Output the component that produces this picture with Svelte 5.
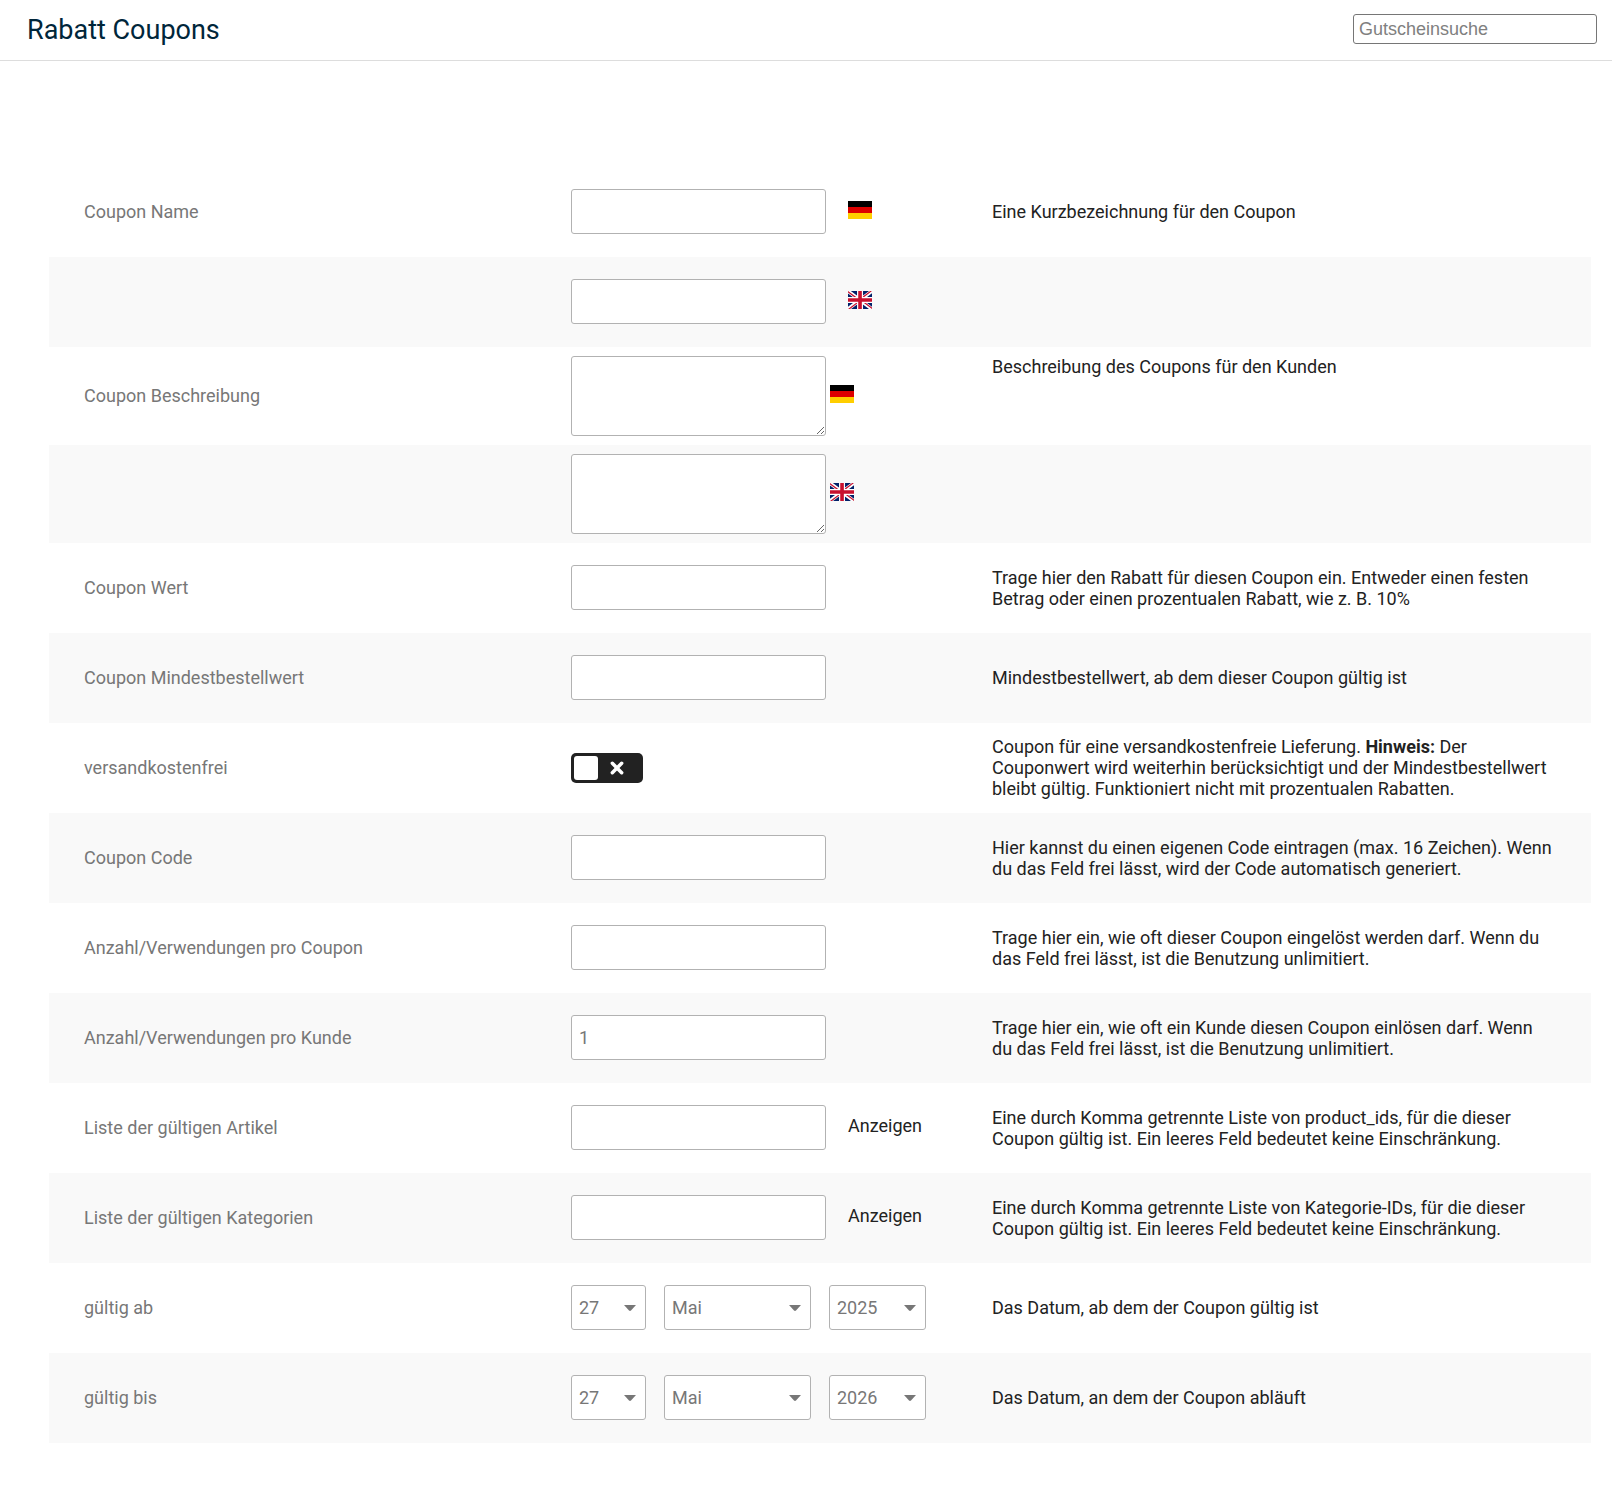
<script lang="ts">
    type Lang = 'de' | 'en';

    interface Field {
        id: string;
        kind: 'text' | 'area' | 'switch' | 'date';
        label?: string;
        aria?: string;
        help?: string;
        note?: string;
        rest?: string;
        lang?: Lang;
        link?: boolean;
        value?: string;
        year?: string;
    }

    const fields: Field[] = [
        { id: 'name-de', kind: 'text', label: 'Coupon Name', lang: 'de', help: 'Eine Kurzbezeichnung für den Coupon' },
        { id: 'name-en', kind: 'text', aria: 'Coupon Name', lang: 'en' },
        { id: 'desc-de', kind: 'area', label: 'Coupon Beschreibung', lang: 'de', help: 'Beschreibung des Coupons für den Kunden' },
        { id: 'desc-en', kind: 'area', aria: 'Coupon Beschreibung', lang: 'en' },
        { id: 'amount', kind: 'text', label: 'Coupon Wert', help: 'Trage hier den Rabatt für diesen Coupon ein. Entweder einen festen Betrag oder einen prozentualen Rabatt, wie z. B. 10%' },
        { id: 'min-order', kind: 'text', label: 'Coupon Mindestbestellwert', help: 'Mindestbestellwert, ab dem dieser Coupon gültig ist' },
        {
            id: 'free-ship',
            kind: 'switch',
            label: 'versandkostenfrei',
            help: 'Coupon für eine versandkostenfreie Lieferung.',
            note: 'Hinweis:',
            rest: 'Der Couponwert wird weiterhin berücksichtigt und der Mindestbestellwert bleibt gültig. Funktioniert nicht mit prozentualen Rabatten.'
        },
        { id: 'code', kind: 'text', label: 'Coupon Code', help: 'Hier kannst du einen eigenen Code eintragen (max. 16 Zeichen). Wenn du das Feld frei lässt, wird der Code automatisch generiert.' },
        { id: 'uses-coupon', kind: 'text', label: 'Anzahl/Verwendungen pro Coupon', help: 'Trage hier ein, wie oft dieser Coupon eingelöst werden darf. Wenn du das Feld frei lässt, ist die Benutzung unlimitiert.' },
        { id: 'uses-user', kind: 'text', label: 'Anzahl/Verwendungen pro Kunde', value: '1', help: 'Trage hier ein, wie oft ein Kunde diesen Coupon einlösen darf. Wenn du das Feld frei lässt, ist die Benutzung unlimitiert.' },
        { id: 'products', kind: 'text', label: 'Liste der gültigen Artikel', link: true, help: 'Eine durch Komma getrennte Liste von product_ids, für die dieser Coupon gültig ist. Ein leeres Feld bedeutet keine Einschränkung.' },
        { id: 'categories', kind: 'text', label: 'Liste der gültigen Kategorien', link: true, help: 'Eine durch Komma getrennte Liste von Kategorie-IDs, für die dieser Coupon gültig ist. Ein leeres Feld bedeutet keine Einschränkung.' },
        { id: 'start', kind: 'date', label: 'gültig ab', year: '2025', help: 'Das Datum, ab dem der Coupon gültig ist' },
        { id: 'finish', kind: 'date', label: 'gültig bis', year: '2026', help: 'Das Datum, an dem der Coupon abläuft' }
    ];

    const days = Array.from({ length: 31 }, (_, i) => String(i + 1).padStart(2, '0'));
    const months = ['Januar', 'Februar', 'März', 'April', 'Mai', 'Juni', 'Juli', 'August', 'September', 'Oktober', 'November', 'Dezember'];
    const years = ['2025', '2026', '2027', '2028', '2029', '2030'];
</script>

{#snippet flag(lang: Lang)}
    {#if lang === 'de'}
        <svg class="flag" viewBox="0 0 24 18" role="img" aria-label="Deutsch">
            <path fill="#000" d="M0 0h24v6H0z" />
            <path fill="#d00" d="M0 6h24v6H0z" />
            <path fill="#ffce00" d="M0 12h24v6H0z" />
        </svg>
    {:else}
        <svg class="flag" viewBox="0 0 640 480" role="img" aria-label="English">
            <path fill="#012169" d="M0 0h640v480H0z" />
            <path fill="#fff" d="m75 0 244 181L562 0h78v62L400 241l240 178v61h-80L320 301 81 480H0v-60l239-178L0 64V0z" />
            <path fill="#c8102e" d="m424 281 216 159v40L369 281zm-184 20 6 35L54 480H0zM640 0v3L391 191l2-44L590 0zM0 0l239 176h-60L0 42z" />
            <path fill="#fff" d="M241 0v480h160V0zM0 160v160h640V160z" />
            <path fill="#c8102e" d="M0 193v96h640v-96zM273 0v480h96V0z" />
        </svg>
    {/if}
{/snippet}

{#snippet dropdown(id: string, size: string, label: string, options: string[], selected: string)}
    <span class="select {size}">
        <select {id} aria-label={label}>
            {#each options as option}
                <option selected={option === selected}>{option}</option>
            {/each}
        </select>
        <svg class="arrow" viewBox="0 0 12 6" aria-hidden="true">
            <path fill="#777" d="M0 0h12L7 5.6Q6 6.4 5 5.6z" />
        </svg>
    </span>
{/snippet}

<header class="topbar">
    <h1>Rabatt Coupons</h1>
    <input class="search" type="search" placeholder="Gutscheinsuche" aria-label="Gutscheinsuche" />
</header>

<form class="coupon-form">
    {#each fields as field}
        <div class="row {field.kind}">
            <div class="cell name">
                {#if field.label}
                    <label for={field.id}>{field.label}</label>
                {/if}
            </div>
            <div class="cell control">
                {#if field.kind === 'text'}
                    <input class="box" id={field.id} type="text" value={field.value ?? ''} aria-label={field.aria} />
                {:else if field.kind === 'area'}
                    <textarea class="box" id={field.id} aria-label={field.aria}></textarea>
                {:else if field.kind === 'switch'}
                    <span class="toggle">
                        <input id={field.id} type="checkbox" />
                        <svg class="cross" viewBox="0 0 12 12" aria-hidden="true">
                            <path d="M2 2l8 8M10 2l-8 8" stroke="#fff" stroke-width="3" stroke-linecap="round" />
                        </svg>
                    </span>
                {:else}
                    {@render dropdown(field.id, 'day', `${field.label} Tag`, days, '27')}
                    {@render dropdown(`${field.id}-month`, 'month', `${field.label} Monat`, months, 'Mai')}
                    {@render dropdown(`${field.id}-year`, 'year', `${field.label} Jahr`, years, field.year ?? '')}
                {/if}
                {#if field.lang || field.link}
                    <span class="extra">
                        {#if field.lang}
                            {@render flag(field.lang)}
                        {:else}
                            <a href="#{field.id}">Anzeigen</a>
                        {/if}
                    </span>
                {/if}
            </div>
            <div class="cell help">
                {#if field.help}
                    <p>
                        {field.help}
                        {#if field.note}<strong>{field.note}</strong> {field.rest}{/if}
                    </p>
                {/if}
            </div>
        </div>
    {/each}
</form>

<style>
    :global(body) {
        background: #fff;
        color: #222;
        font-family: Roboto, sans-serif;
        font-size: 18px;
        line-height: 21px;
    }

    .topbar {
        display: flex;
        justify-content: space-between;
        align-items: flex-start;
        padding: 14px 15px 14px 27px;
        border-bottom: 1px solid #ddd;
    }

    h1 {
        margin: 0;
        color: #00263a;
        font-size: 27px;
        font-weight: 400;
        line-height: 32px;
    }

    .search {
        appearance: none;
        box-sizing: border-box;
        width: 244px;
        height: 30px;
        margin: 0;
        padding: 0 5px;
        border: 1px solid #767676;
        border-radius: 3px;
        background: #fff;
        font-family: 'Liberation Sans', Arial, sans-serif;
        font-size: 18px;
    }

    .search::placeholder {
        color: #808080;
    }

    .coupon-form {
        margin: 106px 21px 49px 49px;
    }

    .row {
        display: grid;
        grid-template-columns: minmax(0, 487fr) minmax(0, 421fr) minmax(0, 634fr);
        align-items: center;
        box-sizing: border-box;
        min-height: 90px;
        padding-bottom: 1px;
    }

    .row:nth-child(even) {
        background: #f9f9f9;
    }

    .row.area {
        min-height: 98px;
    }

    .cell {
        padding: 0 35px;
    }

    .name {
        color: #777;
    }

    .control {
        display: flex;
        align-items: center;
        gap: 22px;
        padding-right: 0;
    }

    .area .control {
        gap: 4px;
    }

    .date .control {
        gap: 18px;
    }

    .area .help {
        align-self: start;
        padding-top: 9px;
    }

    .help p {
        margin: 0;
    }

    strong {
        font-weight: 700;
    }

    .box,
    select {
        box-sizing: border-box;
        height: 45px;
        margin: 0;
        padding: 0 7px;
        border: 1px solid #b2b2b2;
        border-radius: 3px;
        background: #fff;
        color: #777;
        font: inherit;
    }

    .box {
        width: 255px;
    }

    textarea.box {
        height: 80px;
        padding: 7px;
        resize: both;
    }

    .extra {
        padding-bottom: 4px;
    }

    .extra a {
        color: #222;
        text-decoration: none;
    }

    .flag {
        display: block;
        width: 24px;
        height: 18px;
    }

    .toggle {
        position: relative;
        display: block;
        height: 30px;
    }

    .toggle input {
        appearance: none;
        display: block;
        box-sizing: border-box;
        width: 72px;
        height: 30px;
        margin: 0;
        padding: 3px;
        border-radius: 5px;
        background: #222;
        cursor: pointer;
    }

    .toggle input::before {
        content: '';
        display: block;
        width: 24px;
        height: 24px;
        border-radius: 3px;
        background: #fff;
    }

    .toggle input:checked::before {
        margin-left: auto;
    }

    .cross {
        position: absolute;
        top: 8px;
        left: 39px;
        width: 14px;
        height: 14px;
        pointer-events: none;
    }

    .toggle input:checked + .cross {
        display: none;
    }

    .select {
        position: relative;
        display: block;
    }

    select {
        appearance: none;
        display: block;
        width: 100%;
    }

    .day {
        width: 75px;
    }

    .month {
        width: 147px;
    }

    .year {
        width: 97px;
    }

    .arrow {
        position: absolute;
        top: 20px;
        right: 10px;
        width: 12px;
        height: 6px;
        pointer-events: none;
    }
</style>
